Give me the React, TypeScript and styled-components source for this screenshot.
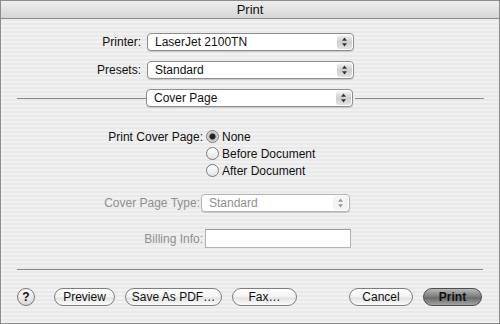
import styled, { createGlobalStyle } from 'styled-components'

const Global = createGlobalStyle`
  html, body {
    margin: 0;
    padding: 0;
  }
  body {
    font-family: "Liberation Sans", Arial, sans-serif;
  }
`

const Window = styled.div`
  width: 500px;
  height: 324px;
  box-sizing: border-box;
  border: 1px solid #8c8c8c;
  display: flex;
  flex-direction: column;
  background: repeating-linear-gradient(to bottom, #f1f1f1 0 2px, #e9e9e9 2px 4px);
  font-size: 12px;
  color: #111;
`

const TitleBar = styled.div`
  height: 17px;
  flex: none;
  border-bottom: 1px solid #8a8a8a;
  background: linear-gradient(#eeeeee, #d6d6d6);
  display: flex;
  align-items: center;
  justify-content: center;
  font-size: 13px;
  color: #111;
`

const Content = styled.div`
  padding: 0 15px;
  display: flex;
  flex-direction: column;
`

const Row = styled.div<{ $top: number; $h?: number }>`
  display: flex;
  align-items: center;
  height: ${p => p.$h ?? 18}px;
  margin-top: ${p => p.$top}px;
`

const Label = styled.span<{ $w: number; $gap?: number; $disabled?: boolean }>`
  width: ${p => p.$w}px;
  margin-right: ${p => p.$gap ?? 0}px;
  text-align: right;
  white-space: nowrap;
  color: ${p => (p.$disabled ? '#8f8f8f' : '#111')};
`

const Popup = styled.div<{ $w: number; $disabled?: boolean }>`
  width: ${p => p.$w}px;
  height: 18px;
  box-sizing: border-box;
  border: 1px solid ${p => (p.$disabled ? '#b4b4b4' : '#8e8e8e')};
  border-radius: 4px;
  background: #fff;
  box-shadow: 0 1px 1px rgba(0, 0, 0, 0.15);
  display: flex;
  align-items: center;
  color: ${p => (p.$disabled ? '#8f8f8f' : '#111')};
`

const PopupText = styled.span`
  flex: 1;
  padding-left: 7px;
  white-space: nowrap;
`

const ArrowCap = styled.span<{ $disabled?: boolean }>`
  width: 15px;
  height: 14px;
  margin-right: 1px;
  border-radius: 3px;
  background: ${p => (p.$disabled ? '#f4f4f4' : 'linear-gradient(#f4f4f4, #cfcfcf 50%, #e2e2e2)')};
  display: flex;
  align-items: center;
  justify-content: center;
`

const Line = styled.div<{ $ml?: number; $mr?: number }>`
  flex: 1;
  height: 1px;
  background: #8a8a8a;
  margin-left: ${p => p.$ml ?? 0}px;
  margin-right: ${p => p.$mr ?? 0}px;
`

const RadioRow = styled.div<{ $indent: number; $top?: number }>`
  display: flex;
  align-items: center;
  height: 17px;
  padding-left: ${p => p.$indent}px;
  margin-top: ${p => p.$top ?? 0}px;
`

const RadioCircle = styled.span<{ $on?: boolean }>`
  width: 13px;
  height: 13px;
  box-sizing: border-box;
  border-radius: 50%;
  border: 1px solid #7a7a7a;
  background: ${p => (p.$on ? 'radial-gradient(circle, #222 0 2.5px, #bdbdbd 3.5px, #e6e6e6 6px)' : 'linear-gradient(#ffffff, #e4e4e4)')};
  margin-right: 3px;
  flex: none;
`

const TextField = styled.div`
  width: 146px;
  height: 19px;
  box-sizing: border-box;
  border: 1px solid #b2b2b2;
  border-top-color: #9a9a9a;
  background: #fff;
`

const ButtonBar = styled.div`
  display: flex;
  align-items: center;
  height: 18px;
  margin-top: 18px;
  padding: 0 2px 0 1px;
`

const HelpButton = styled.span`
  width: 18px;
  height: 18px;
  box-sizing: border-box;
  border-radius: 50%;
  border: 1px solid #777;
  background: linear-gradient(#fdfdfd, #d8d8d8);
  display: flex;
  align-items: center;
  justify-content: center;
  font-weight: bold;
  font-size: 12px;
  margin-right: 19px;
`

const Button = styled.span<{ $w: number; $default?: boolean; $gap?: number }>`
  width: ${p => p.$w}px;
  height: 18px;
  box-sizing: border-box;
  border-radius: 9px;
  border: 1px solid ${p => (p.$default ? '#4e4e4e' : '#7e7e7e')};
  background: ${p =>
    p.$default
      ? 'linear-gradient(#b8b8b8, #7a7a7a 50%, #6a6a6a 55%, #a4a4a4)'
      : 'linear-gradient(#ffffff, #f2f2f2 50%, #e2e2e2 55%, #fbfbfb)'};
  display: flex;
  align-items: center;
  justify-content: center;
  margin-right: ${p => p.$gap ?? 0}px;
  white-space: nowrap;
  color: #111;
  font-weight: ${p => (p.$default ? 'bold' : 'normal')};
`

const Spacer = styled.div`
  flex: 1;
`

const Arrows = ({ color = '#333' }: { color?: string }) => (
  <svg width="7" height="10" viewBox="0 0 7 10">
    <path d="M3.5 0.5 L6 3.8 L1 3.8 Z" fill={color} />
    <path d="M3.5 9.5 L6 6.2 L1 6.2 Z" fill={color} />
  </svg>
)

const Select = ({ w, value, disabled }: { w: number; value: string; disabled?: boolean }) => (
  <Popup $w={w} $disabled={disabled}>
    <PopupText>{value}</PopupText>
    <ArrowCap $disabled={disabled}>
      <Arrows color={disabled ? '#999' : '#333'} />
    </ArrowCap>
  </Popup>
)

export default function App() {
  return (
    <>
      <Global />
      <Window>
        <TitleBar>Print</TitleBar>
        <Content>
          <Row $top={14}>
            <Label $w={125} $gap={6}>Printer:</Label>
            <Select w={207} value="LaserJet 2100TN" />
          </Row>
          <Row $top={10}>
            <Label $w={125} $gap={6}>Presets:</Label>
            <Select w={207} value="Standard" />
          </Row>
          <Row $top={10}>
            <Line $ml={1} />
            <Select w={207} value="Cover Page" />
            <Line $ml={2} $mr={0} />
          </Row>

          <RadioRow $indent={0} $top={21}>
            <Label $w={187} $gap={3}>Print Cover Page:</Label>
            <RadioCircle $on />
            None
          </RadioRow>
          <RadioRow $indent={190}>
            <RadioCircle />
            Before Document
          </RadioRow>
          <RadioRow $indent={190}>
            <RadioCircle />
            After Document
          </RadioRow>

          <Row $top={15}>
            <Label $w={184} $gap={1} $disabled>Cover Page Type:</Label>
            <Select w={149} value="Standard" disabled />
          </Row>
          <Row $top={17} $h={19}>
            <Label $w={187} $gap={2} $disabled>Billing Info:</Label>
            <TextField />
          </Row>

          <Row $top={21} $h={1}>
            <Line $ml={1} $mr={1} />
          </Row>

          <ButtonBar>
            <HelpButton>?</HelpButton>
            <Button $w={61} $gap={10}>Preview</Button>
            <Button $w={97} $gap={10}>Save As PDF…</Button>
            <Button $w={65}>Fax…</Button>
            <Spacer />
            <Button $w={64} $gap={10}>Cancel</Button>
            <Button $w={59} $default>Print</Button>
          </ButtonBar>
        </Content>
      </Window>
    </>
  )
}
